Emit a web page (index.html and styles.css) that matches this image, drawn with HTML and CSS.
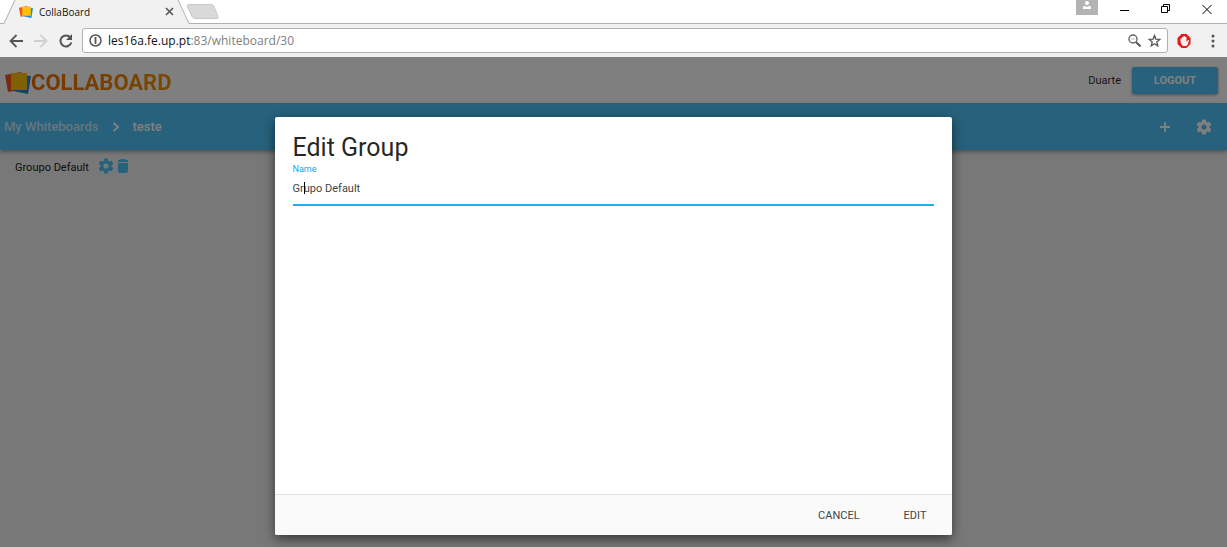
FILE: index.html
```html
<!DOCTYPE html>
<html lang="en">
<head>
<meta charset="utf-8">
<title>CollaBoard</title>
<link rel="stylesheet" href="styles.css">
</head>
<body>
<svg class="defs" aria-hidden="true">
  <symbol id="gear" viewBox="0 0 24 24"><path fill="currentColor" d="M19.43 12.98c.04-.32.07-.64.07-.98s-.03-.66-.07-.98l2.11-1.65c.19-.15.24-.42.12-.64l-2-3.46c-.12-.22-.39-.3-.61-.22l-2.49 1c-.52-.4-1.08-.73-1.69-.98l-.38-2.65C14.46 2.18 14.25 2 14 2h-4c-.25 0-.46.18-.49.42l-.38 2.65c-.61.25-1.17.59-1.69.98l-2.49-1c-.23-.09-.49 0-.61.22l-2 3.46c-.13.22-.07.49.12.64l2.11 1.65c-.04.32-.07.65-.07.98s.03.66.07.98l-2.11 1.65c-.19.15-.24.42-.12.64l2 3.46c.12.22.39.3.61.22l2.49-1c.52.4 1.08.73 1.69.98l.38 2.65c.03.24.24.42.49.42h4c.25 0 .46-.18.49-.42l.38-2.65c.61-.25 1.17-.59 1.69-.98l2.49 1c.23.09.49 0 .61-.22l2-3.46c.12-.22.07-.49-.12-.64l-2.11-1.65zM12 15.5c-1.93 0-3.5-1.57-3.5-3.5s1.57-3.5 3.5-3.5 3.5 1.57 3.5 3.5-1.57 3.5-3.5 3.5z"/></symbol>
  <symbol id="notes" viewBox="0 0 26 22"><path fill="#f4511e" d="M0 3l16-3 3 17-16 3z"/><path fill="#1e88e5" d="M10 2l16 2-3 18-15-3z"/><path fill="#ffc107" d="M6 1h16v17H6z"/></symbol>
</svg>

<div class="browser">
  <div class="tabstrip">
    <svg class="tab-shape" viewBox="0 0 230 25" aria-hidden="true"><path d="M0 23.500H4L15 0H178L189 23.500H230V25H0z" fill="#f1f1f1"/><path d="M190 23.500H230V0H178z" fill="#fff"/><path d="M0 23.500H4L15 0M178 0L189 23.500H230" fill="none" stroke="#b0b0b0"/><path d="M188 4.500H211q2 0 3 2l4 10q1 2-2 2H196q-3 0-4-2L187 6z" fill="#d9d9d9" stroke="#c8c8c8"/></svg>
    <div class="tab">
      <svg class="favicon"><use href="#notes"/></svg>
      <span class="tab-title">CollaBoard</span>
      <button class="plain tab-close" aria-label="Close tab"><svg width="9" height="9" viewBox="0 0 9 9"><path d="M1 1l7 7M8 1L1 8" stroke="#555" stroke-width="1.600"/></svg></button>
    </div>
    <div class="window-buttons">
      <button class="profile" aria-label="Profile"><svg width="12" height="12" viewBox="0 0 12 12"><circle cx="6" cy="3" r="2" fill="#fff"/><path d="M2 9V7q0-1 2-1l2 1 2-1q2 0 2 1v2z" fill="#fff"/></svg></button>
      <button class="plain" aria-label="Minimize"><svg width="10" height="10" viewBox="0 0 10 10"><path d="M0 6.500h9" stroke="#000"/></svg></button>
      <button class="plain" aria-label="Restore"><svg width="10" height="10" viewBox="0 0 10 10"><path d="M.5 2.500h6v6h-6zM2.500 2V.5h6v6H7" fill="none" stroke="#000"/></svg></button>
      <button class="plain" aria-label="Close"><svg width="10" height="10" viewBox="0 0 10 10"><path d="M.5 1l9 9M9.500 1l-9 9" stroke="#000"/></svg></button>
    </div>
  </div>
  <div class="toolbar">
    <button class="plain" aria-label="Back"><svg width="14" height="14" viewBox="0 0 14 14"><path d="M14 7H2M7.500 1L1.500 7l6 6" fill="none" stroke="#555" stroke-width="1.800"/></svg></button>
    <button class="plain" aria-label="Forward"><svg width="14" height="14" viewBox="0 0 14 14"><path d="M0 7h12M6.500 1l6 6-6 6" fill="none" stroke="#d0d0d0" stroke-width="1.800"/></svg></button>
    <button class="plain" aria-label="Reload"><svg width="14" height="14" viewBox="0 0 14 14"><path d="M11.300 3.500A5.500 5.500 0 1 0 12.300 8.500" fill="none" stroke="#555" stroke-width="2"/><path d="M13 0v6H7z" fill="#555"/></svg></button>
    <div class="address">
      <svg width="13" height="13" viewBox="0 0 13 13" aria-hidden="true"><circle cx="6.500" cy="6.500" r="5.500" fill="none" stroke="#555" stroke-width="1.500"/><path d="M6.500 3v7" stroke="#555" stroke-width="1.800"/></svg>
      <span class="url">les16a.fe.up.pt<span class="path">:83/whiteboard/30</span></span>
      <button class="plain" aria-label="Zoom"><svg width="13" height="13" viewBox="0 0 13 13"><circle cx="5" cy="5" r="4" fill="none" stroke="#666" stroke-width="1.400"/><path d="M3 5h4" stroke="#bbb"/><path d="M8 8l4.500 4.500" stroke="#555" stroke-width="2"/></svg></button>
      <button class="plain" aria-label="Bookmark"><svg width="13" height="13" viewBox="0 0 13 13"><path d="M6.500 1.500l1.400 3.600 3.900.3-3 2.500.9 3.900-3.200-2.100-3.200 2.100.9-3.900-3-2.500 3.900-.3z" fill="none" stroke="#555" stroke-width="1.300"/></svg></button>
    </div>
    <button class="plain" aria-label="Content blocker"><svg width="14" height="16" viewBox="0 0 14 16"><path d="M4.500 1h5l4 4v6l-4 4h-5l-4-4V5z" fill="#e8191d"/><path d="M3.500 5.500h1.500V4h1.500V3H8v1h1.500v5l1.500-2h1q-.5 4-2.500 6H6Q3 11 3.500 5.500z" fill="#f7f0f0"/></svg></button>
    <button class="plain menu" aria-label="Menu"><svg width="4" height="14" viewBox="0 0 4 14"><g fill="#555"><circle cx="2" cy="2" r="1.500"/><circle cx="2" cy="7" r="1.500"/><circle cx="2" cy="12" r="1.500"/></g></svg></button>
  </div>
</div>

<div class="viewport">
  <header class="site-header">
    <a class="logo" href="#"><svg class="logo-mark" aria-hidden="true"><use href="#notes"/></svg><span class="wordmark">COLLABOARD</span></a>
    <span class="user">Duarte</span>
    <button class="logout">LOGOUT</button>
  </header>
  <nav class="crumbs">
    <a href="#">My Whiteboards</a>
    <svg class="chevron" viewBox="0 0 8 10" aria-hidden="true"><path d="M1.500 1l4.500 4-4.500 4" fill="none" stroke="currentColor" stroke-width="1.800"/></svg>
    <a class="current" href="#">teste</a>
    <div class="actions">
      <button class="plain" aria-label="Add"><svg width="10" height="10" viewBox="0 0 10 10"><path d="M5 0v10M0 5h10" stroke="currentColor" stroke-width="1.800"/></svg></button>
      <button class="plain" aria-label="Settings"><svg width="18" height="18"><use href="#gear"/></svg></button>
    </div>
  </nav>
  <main class="group">
    <span class="group-name">Groupo Default</span>
    <button class="plain" aria-label="Edit group"><svg width="18" height="18"><use href="#gear"/></svg></button>
    <button class="plain" aria-label="Delete group"><svg width="12" height="14" viewBox="0 0 12 14"><path fill="currentColor" d="M1 4h10v8q0 2-2 2H3q-2 0-2-2zM1 1h2l1-1h4l1 1h2v2H1z"/></svg></button>
  </main>

  <div class="backdrop">
    <form class="modal" role="dialog" aria-labelledby="modal-title">
      <div class="modal-body">
        <h1 id="modal-title">Edit Group</h1>
        <label for="name">Name</label>
        <div class="field"><input id="name" type="text" value="Grupo Default"><span class="caret"></span></div>
      </div>
      <div class="modal-footer">
        <button type="button">CANCEL</button>
        <button type="button">EDIT</button>
      </div>
    </form>
  </div>
</div>
</body>
</html>
```
FILE: styles.css
```css
* { box-sizing: border-box; }

body {
  margin: 0;
  min-height: 100vh;
  display: flex;
  flex-direction: column;
  font-family: Roboto, "Liberation Sans", sans-serif;
  font-size: 11px;
  color: rgba(0, 0, 0, 0.87);
}

button {
  margin: 0;
  padding: 0;
  border: 0;
  font: inherit;
  color: inherit;
  cursor: pointer;
}

svg { display: block; }
.defs { position: absolute; width: 0; height: 0; }
.plain { background: none; }

/* Browser frame */
.browser {
  background: #f1f1f1;
  font-family: "Open Sans", "Noto Sans", sans-serif;
  color: #111;
}

.tabstrip {
  position: relative;
  display: flex;
  justify-content: space-between;
  height: 24px;
  background: #fff;
  border-bottom: 1px solid #b0b0b0;
}

.tab-shape {
  position: absolute;
  left: 0;
  top: 0;
  width: 230px;
  height: 25px;
}

.tab {
  position: relative;
  display: flex;
  align-items: center;
  width: 174px;
  padding-left: 19px;
  font-size: 10px;
}

.favicon { width: 14px; height: 12px; margin-right: 6px; }
.tab-title { flex: 1; }

.window-buttons {
  display: flex;
  align-items: flex-start;
  gap: 31px;
  padding-right: 15px;
}

.window-buttons .plain { padding-top: 4px; }

.profile {
  display: flex;
  justify-content: center;
  width: 22px;
  height: 15px;
  margin-right: -9px;
  background: #b3b3b3;
}

.toolbar {
  display: flex;
  align-items: center;
  gap: 11px;
  height: 33px;
  padding: 0 12px 0 9px;
}

.address {
  flex: 1;
  display: flex;
  align-items: center;
  gap: 7px;
  height: 25px;
  padding: 0 6px;
  margin: 0 -2px;
  background: #fff;
  border: 1px solid #b0b0b0;
  border-radius: 3px;
}

.url { flex: 1; margin-left: -1px; font-size: 12px; }
.path { color: #808080; }
.menu { margin-left: 9px; }

/* Application page */
.viewport {
  position: relative;
  flex: 1;
  background: #f0f0f0;
}

.site-header {
  display: flex;
  align-items: center;
  height: 46px;
  padding: 0 9px 0 5px;
  background: #fff;
}

.logo {
  display: flex;
  align-items: center;
  margin-right: auto;
  padding-top: 6px;
  text-decoration: none;
}

.logo-mark { width: 26px; height: 22px; }

.wordmark {
  font-size: 22px;
  font-weight: 700;
  line-height: 24px;
  background: linear-gradient(90deg, #e66c00, #f59300);
  background-clip: text;
  color: transparent;
}

.user { margin-right: 11px; }

.logout {
  width: 86px;
  height: 27px;
  color: #fff;
  font-weight: 700;
  background: #4fc3f7;
  border-radius: 2px;
  box-shadow: 0 1px 3px rgba(0, 0, 0, 0.4);
}

.crumbs {
  position: relative;
  display: flex;
  align-items: center;
  height: 47px;
  padding: 0 14px 0 4px;
  font-size: 13px;
  font-weight: 500;
  color: #fff;
  background: #4fc3f7;
  box-shadow: 0 2px 4px rgba(0, 0, 0, 0.35);
}

.crumbs a { color: rgba(255, 255, 255, 0.7); text-decoration: none; }
.crumbs .current { color: #fff; }
.chevron { width: 8px; height: 10px; margin: 0 12px 0 14px; }

.actions {
  display: flex;
  align-items: center;
  gap: 25px;
  margin-left: auto;
}

.group {
  display: flex;
  align-items: center;
  padding: 7px 15px;
  color: #4fc3f7;
}

.group-name {
  margin: 2px 8px 0 0;
  color: #222;
}

.group .plain + .plain { margin-left: 2px; }

/* Dialog */
.backdrop {
  position: absolute;
  inset: 0;
  display: flex;
  justify-content: center;
  align-items: flex-start;
  padding-top: 60px;
  padding-bottom: 12px;
  background: rgba(0, 0, 0, 0.5);
}

.modal {
  display: flex;
  flex-direction: column;
  width: 55.25%;
  height: 100%;
  background: #fff;
  border-radius: 2px;
  box-shadow: 0 4px 12px rgba(0, 0, 0, 0.55);
}

.modal-body { flex: 1; padding: 17px 18px; }

h1 {
  margin: 0;
  font-size: 25px;
  font-weight: 400;
  line-height: 28px;
}

.modal label {
  display: block;
  font-size: 9px;
  line-height: 14px;
  color: #03a9f4;
}

.field { position: relative; }

.field input {
  display: block;
  width: 100%;
  height: 30px;
  padding: 0 0 4px;
  border: 0;
  border-bottom: 2px solid #1eaef5;
  outline: 0;
  font: inherit;
  color: #444;
}

.caret {
  position: absolute;
  left: 11px;
  top: 6px;
  width: 1px;
  height: 12px;
  background: #000;
}

.modal-footer {
  display: flex;
  justify-content: flex-end;
  gap: 4px;
  height: 41px;
  padding: 0 6px;
  background: #fafafa;
  border-top: 1px solid #e0e0e0;
  border-radius: 0 0 2px 2px;
}

.modal-footer button {
  padding: 0 20px;
  background: none;
  color: #444;
}
```
